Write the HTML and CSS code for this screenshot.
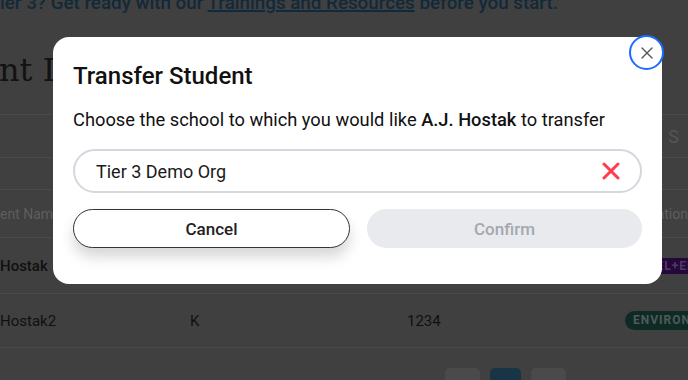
FILE: index.html
```html
<!DOCTYPE html>
<html lang="en">
<head>
    <meta charset="UTF-8">
    <meta name="viewport" content="width=device-width, initial-scale=1.0">
    <title>Transfer Student</title>
    <link rel="stylesheet" href="styles.css">
</head>
<body>
    <div class="page">
        <p class="banner">ier 3? Get ready with our <u>Trainings and Resources</u> before you start.</p>
        <h1 class="heading">nt D</h1>

        <div class="tabs-row"><span class="tab-end">S</span></div>
        <div class="row-blank"></div>
        <div class="row head-row">
            <span class="col-name">ent Name</span>
            <span class="col-end">ntion</span>
        </div>
        <div class="row student-row">
            <span class="col-name strong">Hostak</span>
            <span class="col-grade"></span>
            <span class="col-id wide"></span>
            <span class="badge purple">SEL+ENVIRONMENTAL</span>
        </div>
        <div class="row student-row last">
            <span class="col-name">Hostak2</span>
            <span class="col-grade">K</span>
            <span class="col-id">1234</span>
            <span class="badge green">ENVIRONMENTAL</span>
        </div>

        <div class="pager">
            <span class="page-btn"></span>
            <span class="page-btn active"></span>
            <span class="page-btn"></span>
        </div>
    </div>

    <div class="modal">
        <button class="close-btn" aria-label="Close">
            <svg width="14" height="14" viewBox="0 0 14 14">
                <path d="M2 2 L12 12 M12 2 L2 12" stroke="#555" stroke-width="1.4" fill="none" stroke-linecap="round"/>
            </svg>
        </button>
        <h2 class="modal-title">Transfer Student</h2>
        <p class="modal-text">Choose the school to which you would like <strong>A.J. Hostak</strong> to transfer</p>
        <div class="school-input">
            <span>Tier 3 Demo Org</span>
            <svg class="clear-icon" width="18" height="18" viewBox="0 0 18 18">
                <path d="M2 2 L16 16 M16 2 L2 16" stroke="#ff3b4e" stroke-width="3" fill="none" stroke-linecap="round"/>
            </svg>
        </div>
        <div class="modal-actions">
            <button class="btn btn-cancel">Cancel</button>
            <button class="btn btn-confirm" disabled>Confirm</button>
        </div>
    </div>
</body>
</html>
```

FILE: styles.css
```css
body {
    margin: 0;
    background-color: #404040;
    font-family: Roboto, "Noto Sans", sans-serif;
    overflow: hidden;
    height: 380px;
}
.page {
    height: 380px;
    overflow: hidden;
}
.banner {
    margin: -8px 0 0 0;
    font-size: 18.8px;
    color: #12293a;
    white-space: nowrap;
    font-weight: 500;
}
.banner u {
    text-decoration-thickness: 2px;
}
.heading {
    margin: 38px 0 0 -1px;
    font-family: "DejaVu Serif", "Liberation Serif", serif;
    font-weight: normal;
    font-size: 32px;
    color: #121212;
    white-space: nowrap;
    height: 36px;
    line-height: 36px;
}
.tabs-row {
    margin-top: 26px;
    height: 42px;
    border-top: 1px solid #4a4a4a;
    border-bottom: 1px solid #4a4a4a;
    display: flex;
    justify-content: flex-end;
    align-items: center;
}
.tab-end {
    font-size: 18px;
    color: #555;
    margin-right: 9px;
}
.row-blank {
    height: 31px;
    border-bottom: 1px solid #4a4a4a;
}
.row {
    display: flex;
    align-items: center;
    border-bottom: 1px solid #4a4a4a;
    white-space: nowrap;
    overflow: hidden;
}
.head-row {
    height: 47px;
    font-size: 14px;
    color: #5e5e5e;
}
.student-row {
    height: 55px;
    font-size: 15px;
    color: #101010;
}
.student-row.last {
    height: 53px;
}
.col-name {
    width: 190px;
    flex-shrink: 0;
}
.strong {
    font-weight: 500;
}
.col-grade {
    width: 217px;
    flex-shrink: 0;
}
.col-id {
    width: 218px;
    flex-shrink: 0;
}
.col-id.wide {
    width: 233px;
}
.col-end {
    margin-left: auto;
}
.badge {
    flex-shrink: 0;
    padding: 2px 8px;
    font-size: 12px;
    font-weight: 700;
    letter-spacing: 1px;
}
.purple {
    background: #26073b;
    color: #4e3d5e;
    border-radius: 3px;
    line-height: 12px;
}
.green {
    background: #0f2a24;
    color: #4c5d58;
    border-radius: 10px;
    line-height: 15px;
}
.pager {
    display: flex;
    gap: 10px;
    margin: 20px 0 0 445px;
}
.page-btn {
    width: 35px;
    height: 30px;
    border-radius: 5px;
    background: #4a4a4a;
}
.page-btn.active {
    width: 31px;
    background: #173544;
}

/* modal */
.modal {
    position: absolute;
    left: 53px;
    top: 37px;
    width: 609px;
    height: 247px;
    box-sizing: border-box;
    padding: 25px 20px 0 20px;
    background: white;
    border-radius: 16px;
}
.close-btn {
    position: absolute;
    left: 576px;
    top: -2px;
    width: 35px;
    height: 35px;
    border-radius: 50%;
    border: 2px solid #1a6bff;
    background: white;
    padding: 0;
    display: flex;
    align-items: center;
    justify-content: center;
}
.modal-title {
    margin: 0;
    font-size: 24px;
    font-weight: 500;
    line-height: 28px;
    color: #111;
}
.modal-text {
    margin: 18px 0 0 0;
    font-size: 18.3px;
    line-height: 24px;
    color: #111;
}
.modal-text strong {
    font-weight: 500;
}
.school-input {
    margin-top: 17px;
    height: 44px;
    box-sizing: border-box;
    border: 2px solid #d3d7de;
    border-radius: 22px;
    display: flex;
    align-items: center;
    justify-content: space-between;
    padding: 0 20px 0 21px;
    font-size: 18px;
    color: #1a1a1a;
}
.modal-actions {
    margin-top: 16px;
    display: flex;
    gap: 17px;
}
.btn {
    flex: 1;
    height: 39px;
    border-radius: 20px;
    font-family: Roboto, sans-serif;
    font-size: 17px;
    font-weight: 500;
}
.btn-cancel {
    background: white;
    border: 1.5px solid #333;
    color: #222;
    box-shadow: 0 9px 14px rgba(0, 0, 0, 0.16);
}
.btn-confirm {
    background: #e9eaee;
    border: none;
    color: #a3a8b0;
}
```
